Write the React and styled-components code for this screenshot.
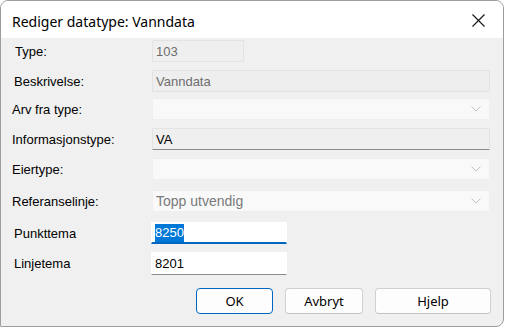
import React from 'react';
import styled, { createGlobalStyle } from 'styled-components';

const GlobalStyle = createGlobalStyle`
  html, body {
    margin: 0;
    padding: 0;
    background: #ffffff;
  }
  body {
    font-family: "Liberation Sans", Arial, sans-serif;
  }
`;

const Window = styled.div`
  width: 502px;
  height: 325px;
  border: 1px solid #9d9d9d;
  border-radius: 8px 8px 8px 1px;
  overflow: hidden;
  display: flex;
  flex-direction: column;
  background: #f0f0f0;
`;

const TitleBar = styled.div`
  height: 37px;
  flex: none;
  background: #ffffff;
  display: flex;
  align-items: center;
  justify-content: space-between;
  padding: 0 0 0 11px;
`;

const Title = styled.span`
  font-family: "Noto Sans", "Open Sans", sans-serif;
  font-size: 14px;
  color: #000;
  margin-top: 3px;
`;

const CloseButton = styled.button`
  width: 44px;
  height: 37px;
  border: none;
  background: transparent;
  display: flex;
  align-items: center;
  justify-content: center;
  padding: 0;
  margin-right: 3px;
  margin-top: 2px;
`;

const Body = styled.div`
  flex: 1;
  display: flex;
  flex-direction: column;
  padding: 2px 0 0 0;
`;

const Row = styled.div`
  display: grid;
  grid-template-columns: ${p => p.$col || 151}px 1fr;
  align-items: center;
  height: 22px;
  margin-top: ${p => p.$gap || 0}px;
`;

const Label = styled.label`
  font-size: 13px;
  color: #000;
  padding-left: ${p => p.$indent || 11}px;
`;

const Field = styled.div`
  box-sizing: border-box;
  height: ${p => p.$h || 22}px;
  width: ${p => p.$w}px;
  background: ${p => p.$bg || '#eeeeee'};
  border: 1px solid ${p => p.$border || '#e2e2e2'};
  border-bottom: ${p => p.$bottom || `1px solid ${p.$border || '#e2e2e2'}`};
  border-radius: 1px;
  display: flex;
  align-items: center;
  justify-content: space-between;
  padding: 0 8px 0 3px;
  font-size: ${p => p.$size || 13}px;
  color: ${p => p.$color || '#6d6d6d'};
`;

const Selected = styled.span`
  background: #0078d7;
  color: #ffffff;
  padding: 1px 0;
  line-height: 16px;
`;

const ButtonRow = styled.div`
  display: flex;
  justify-content: flex-end;
  gap: 12px;
  padding-right: 12px;
  margin-top: 14px;
`;

const Button = styled.button`
  box-sizing: border-box;
  width: ${p => p.$w}px;
  height: 26px;
  background: #fdfdfd;
  border: 1px solid ${p => (p.$primary ? '#0067c0' : '#d0d0d0')};
  border-bottom-color: ${p => (p.$primary ? '#0067c0' : '#c3c3c3')};
  border-radius: 4px;
  font-family: "Noto Sans", "Open Sans", sans-serif;
  font-size: 13px;
  color: #000;
  padding: 0;
`;

const Chevron = () => (
  <svg width="10" height="6" viewBox="0 0 10 6">
    <path d="M0.5 0.5 L5 5 L9.5 0.5" fill="none" stroke="#c2c2c2" strokeWidth="1" />
  </svg>
);

const CloseIcon = () => (
  <svg width="13" height="13" viewBox="0 0 13 13">
    <path d="M0.5 0.5 L12.5 12.5 M12.5 0.5 L0.5 12.5" stroke="#1a1a1a" strokeWidth="1.2" />
  </svg>
);

const App = () => {
  return (
    <>
      <GlobalStyle />
      <Window>
        <TitleBar>
          <Title>Rediger datatype: Vanndata</Title>
          <CloseButton aria-label="Lukk">
            <CloseIcon />
          </CloseButton>
        </TitleBar>
        <Body>
          <Row>
            <Label $indent={14}>Type:</Label>
            <Field $w={92} $bg="#efefef" $border="#e3e3e3">103</Field>
          </Row>
          <Row $gap={8}>
            <Label $indent={13}>Beskrivelse:</Label>
            <Field $w={338}>Vanndata</Field>
          </Row>
          <Row $gap={6}>
            <Label>Arv fra type:</Label>
            <Field $w={338} $bg="#f9f9f9" $border="#efefef">
              <span />
              <Chevron />
            </Field>
          </Row>
          <Row $gap={8}>
            <Label>Informasjonstype:</Label>
            <Field $w={338} $bg="#efefef" $border="#e3e3e3" $bottom="1px solid #8a8a8a" $color="#000">
              VA
            </Field>
          </Row>
          <Row $gap={8}>
            <Label>Eiertype:</Label>
            <Field $w={338} $bg="#f9f9f9" $border="#efefef">
              <span />
              <Chevron />
            </Field>
          </Row>
          <Row $gap={10}>
            <Label>Referanselinje:</Label>
            <Field $w={338} $bg="#f9f9f9" $border="#efefef" $size={14} $color="#7a7a7a">
              Topp utvendig
              <Chevron />
            </Field>
          </Row>
          <Row $gap={10} $col={150}>
            <Label $indent={13}>Punkttema</Label>
            <Field $w={136} $bg="#ffffff" $border="#ffffff" $bottom="2px solid #0067c0" $color="#000">
              <Selected>8250</Selected>
            </Field>
          </Row>
          <Row $gap={8} $col={150}>
            <Label $indent={13}>Linjetema</Label>
            <Field $w={136} $h={23} $bg="#ffffff" $border="#ffffff" $bottom="1px solid #8a8a8a" $color="#000">
              8201
            </Field>
          </Row>
          <ButtonRow>
            <Button $primary $w={77}>OK</Button>
            <Button $w={78}>Avbryt</Button>
            <Button $w={116}>Hjelp</Button>
          </ButtonRow>
        </Body>
      </Window>
    </>
  );
};

export default App;
